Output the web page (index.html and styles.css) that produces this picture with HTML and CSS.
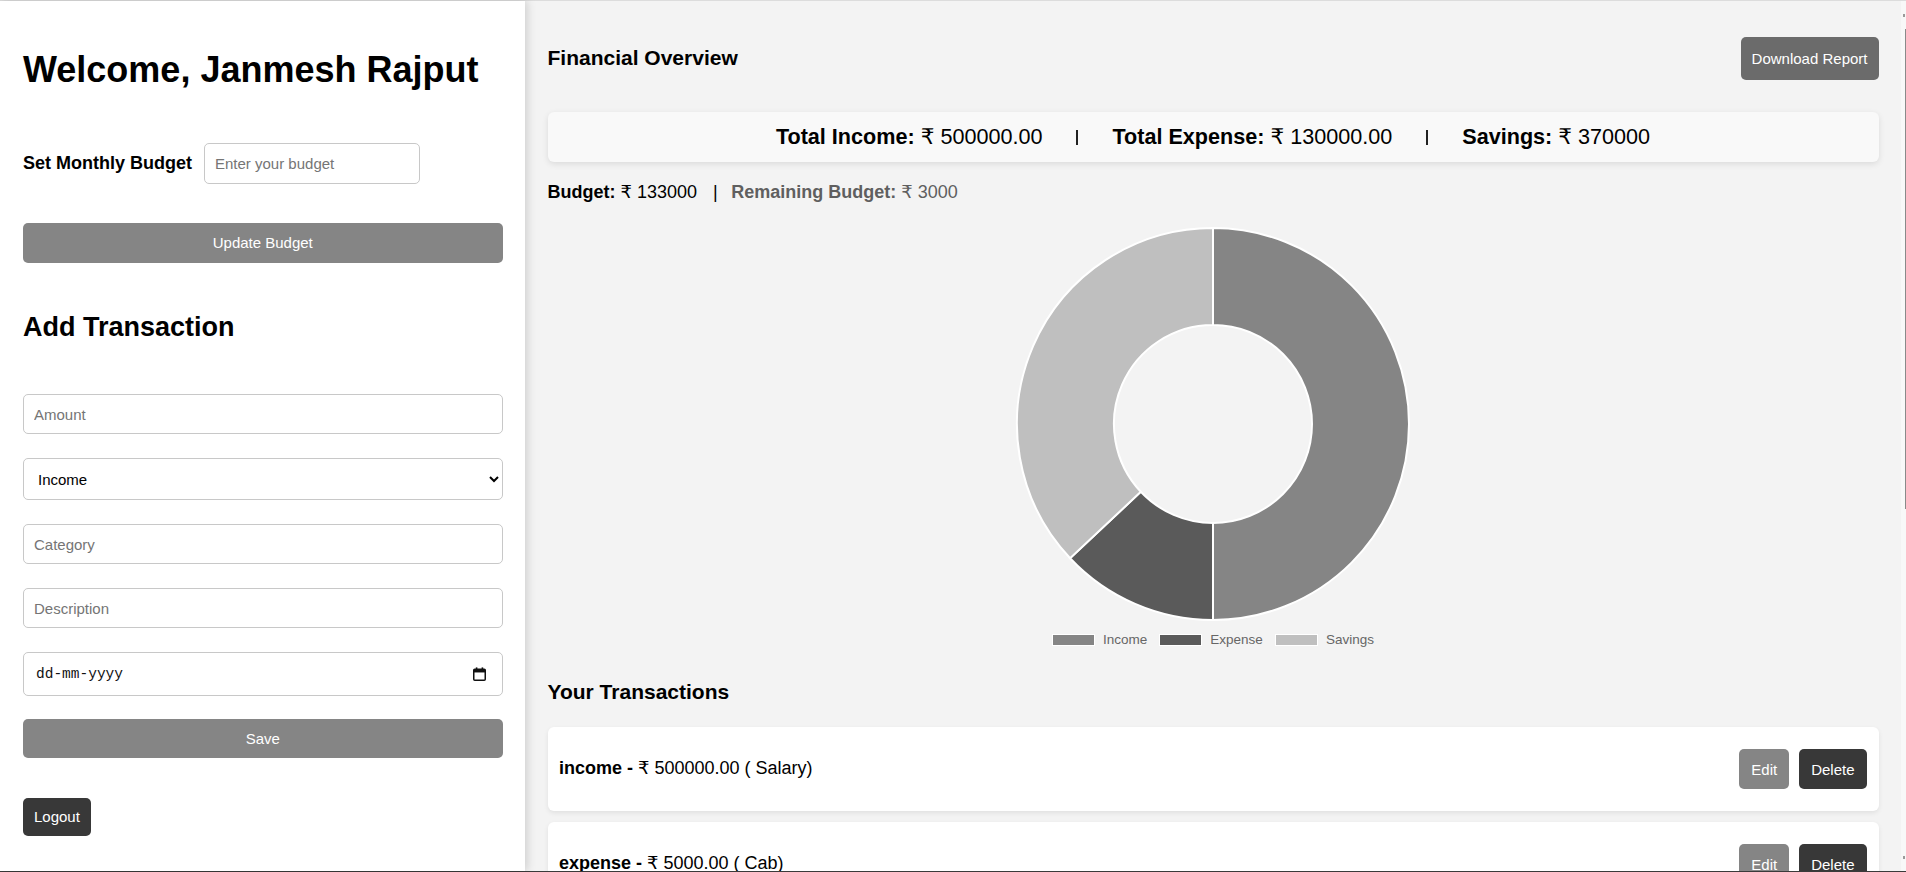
FILE: index.html
```html
<!DOCTYPE html>
<html lang="en">
<head>
<meta charset="utf-8">
<title>Dashboard</title>
<link rel="stylesheet" href="styles.css">
</head>
<body>
<div class="app">
  <aside class="sidebar">
    <h1 class="welcome">Welcome, Janmesh Rajput</h1>
    <div class="budget-row">
      <label class="budget-label" for="budget">Set Monthly Budget</label>
      <input id="budget" class="field budget-input" type="number" placeholder="Enter your budget">
    </div>
    <button class="btn btn-grey btn-block update-btn">Update Budget</button>

    <h2 class="add-title">Add Transaction</h2>
    <input class="field amount" type="number" placeholder="Amount">
    <select class="field select">
      <option>Income</option>
      <option>Expense</option>
    </select>
    <input class="field gap" type="text" placeholder="Category">
    <input class="field gap" type="text" placeholder="Description">
    <div class="field date-field">
      <input class="date-input" type="text" placeholder="dd-mm-yyyy">
      <svg class="cal-icon" width="13" height="14" viewBox="0 0 13 14" aria-hidden="true">
        <rect x="0.75" y="2.25" width="11.5" height="11" rx="1" fill="none" stroke="#111" stroke-width="1.5"/>
        <rect x="0.75" y="2.25" width="11.5" height="3.2" fill="#111"/>
        <rect x="2.8" y="0.4" width="1.6" height="2.6" fill="#111"/>
        <rect x="8.6" y="0.4" width="1.6" height="2.6" fill="#111"/>
      </svg>
    </div>
    <button class="btn btn-grey btn-block save-btn">Save</button>
    <button class="btn btn-dark logout-btn">Logout</button>
  </aside>

  <main class="main">
    <div class="header">
      <h3 class="section-title">Financial Overview</h3>
      <button class="btn download-btn">Download Report</button>
    </div>

    <div class="summary">
      <span><strong>Total Income:</strong> ₹ 500000.00</span>
      <span class="divider"></span>
      <span><strong>Total Expense:</strong> ₹ 130000.00</span>
      <span class="divider"></span>
      <span><strong>Savings:</strong> ₹ 370000</span>
    </div>

    <p class="budget-line"><strong>Budget:</strong> ₹ 133000<span class="sep">|</span><span class="remaining"><strong>Remaining Budget:</strong> ₹ 3000</span></p>

    <div class="chart">
      <svg class="donut" width="396" height="396" viewBox="0 0 396 396">
        <path d="M198,2 A196,196 0 0 1 198,394 L198,297 A99,99 0 0 0 198,99 Z" fill="#858585" stroke="#fff" stroke-width="2"/>
        <path d="M198,394 A196,196 0 0 1 55.1,332.2 L125.8,265.8 A99,99 0 0 0 198,297 Z" fill="#5a5a5a" stroke="#fff" stroke-width="2"/>
        <path d="M55.1,332.2 A196,196 0 0 1 198,2 L198,99 A99,99 0 0 0 125.8,265.8 Z" fill="#bfbfbf" stroke="#fff" stroke-width="2"/>
      </svg>
      <ul class="legend">
        <li><span class="swatch sw-income"></span>Income</li>
        <li><span class="swatch sw-expense"></span>Expense</li>
        <li><span class="swatch sw-savings"></span>Savings</li>
      </ul>
    </div>

    <h3 class="section-title tx-title">Your Transactions</h3>
    <ul class="tx-list">
      <li class="tx">
        <span class="tx-text"><strong>income -</strong> ₹ 500000.00 ( Salary)</span>
        <span class="tx-actions">
          <button class="btn btn-grey small">Edit</button>
          <button class="btn btn-dark small">Delete</button>
        </span>
      </li>
      <li class="tx">
        <span class="tx-text"><strong>expense -</strong> ₹ 5000.00 ( Cab)</span>
        <span class="tx-actions">
          <button class="btn btn-grey small">Edit</button>
          <button class="btn btn-dark small">Delete</button>
        </span>
      </li>
    </ul>
  </main>

  <div class="scrollbar" aria-hidden="true">
    <span class="scroll-arrow"></span>
    <span class="scroll-thumb"></span>
    <span class="scroll-arrow bottom"></span>
  </div>
</div>
</body>
</html>
```

FILE: styles.css
```css
* { box-sizing: border-box; }

html, body {
  margin: 0;
  padding: 0;
  height: 100%;
  overflow: hidden;
}

body {
  font-family: "Liberation Sans", Arial, "DejaVu Sans", sans-serif;
  font-size: 18px;
  color: #000;
  background: #f3f3f3;
}

.app {
  display: flex;
  height: 872px;
  border-top: 1px solid #dcdcdc;
  border-bottom: 1px solid #3a3a3a;
}

/* ---------- sidebar ---------- */
.sidebar {
  position: relative;
  z-index: 1;
  width: 525px;
  flex: 0 0 525px;
  background: #fff;
  padding: 48px 22.5px 0 23px;
  display: flex;
  flex-direction: column;
  align-items: stretch;
  box-shadow: 2px 0 9px rgba(0, 0, 0, 0.16);
}

.welcome {
  margin: 0;
  font-size: 36px;
  line-height: 41.4px;
  font-weight: bold;
}

.budget-row {
  margin-top: 53px;
  display: flex;
  align-items: center;
  gap: 12px;
}

.budget-label {
  font-weight: bold;
  font-size: 18px;
}

.field {
  font-family: "Liberation Sans", Arial, sans-serif;
  font-size: 15px;
  color: #000;
  background: #fff;
  border: 1px solid #c8c8c8;
  border-radius: 5px;
  height: 40.4px;
  padding: 0 10px;
  outline: none;
}

.field::placeholder { color: #757575; }

.budget-input {
  width: 215.5px;
}

.btn {
  font-family: "Liberation Sans", Arial, sans-serif;
  font-size: 15px;
  color: #fff;
  border: none;
  border-radius: 5px;
  cursor: pointer;
  line-height: 17px;
}

.btn-grey { background: #858585; }
.btn-dark { background: #383838; }

.btn-block {
  width: 100%;
  height: 39.7px;
}

.update-btn { margin-top: 39.2px; }

.add-title {
  margin: 49.4px 0 0;
  font-size: 27px;
  line-height: 31px;
  font-weight: bold;
}

.amount { margin-top: 51px; }

.select {
  margin-top: 23.5px;
  height: 42.4px;
  padding: 0 10px;
}

.gap { margin-top: 23.6px; }

.date-field {
  margin-top: 23.6px;
  height: 44.4px;
  display: flex;
  align-items: center;
  padding: 0 16px 0 12px;
}

.date-input {
  flex: 1;
  border: none;
  outline: none;
  background: transparent;
  font-family: "Liberation Mono", "DejaVu Sans Mono", monospace;
  font-size: 14.5px;
  padding: 0;
  letter-spacing: 0;
}

.date-input::placeholder { color: #111; }

.cal-icon { flex: 0 0 auto; }

.save-btn { margin-top: 22.3px; }

.logout-btn {
  align-self: flex-start;
  margin-top: 39.3px;
  height: 38.7px;
  padding: 0 11px;
}

/* ---------- main ---------- */
.main {
  flex: 1;
  min-width: 0;
  height: 100%;
  overflow: hidden;
  padding: 21px 22.5px 22px 22.5px;
  background: #f3f3f3;
}

.scrollbar {
  flex: 0 0 5px;
  width: 5px;
  background: #f8f8f8;
  display: flex;
  flex-direction: column;
  align-items: flex-end;
  padding-top: 13px;
}

.scroll-arrow {
  width: 2px;
  height: 3px;
  background: #9a9a9a;
  margin-right: 1px;
}

.scroll-arrow.bottom {
  margin-top: auto;
  margin-bottom: 12px;
}

.scroll-thumb {
  margin-top: 12px;
  width: 1px;
  height: 480px;
  background: #8a8a8a;
}

.header {
  height: 72px;
  display: flex;
  align-items: center;
  justify-content: space-between;
}

.section-title {
  margin: 0;
  font-size: 21px;
  line-height: 24px;
  font-weight: bold;
}

.download-btn {
  background: #6b6b6b;
  height: 43px;
  padding: 0 11px;
}

.summary {
  margin-top: 18px;
  height: 50px;
  background: #f9f9f9;
  border-radius: 6px;
  box-shadow: 0 2px 6px rgba(0, 0, 0, 0.1);
  display: flex;
  align-items: center;
  justify-content: center;
  gap: 34px;
  font-size: 21.6px;
}

.divider {
  display: inline-block;
  width: 2px;
  height: 15px;
  background: #222;
}

.budget-line {
  margin: 20.4px 0 0;
  font-size: 18px;
  line-height: 20.7px;
}

.sep { margin: 0 13.5px 0 16px; }

.remaining { color: #5f5f5f; }

.chart {
  margin-top: 23.3px;
  display: flex;
  flex-direction: column;
  align-items: center;
}

.donut { display: block; }

.legend {
  list-style: none;
  margin: 9.7px 0 0;
  padding: 0;
  display: flex;
  gap: 12px;
  font-size: 13.5px;
  line-height: 15.5px;
  color: #666;
}

.legend li {
  display: flex;
  align-items: center;
  gap: 8px;
}

.swatch {
  display: inline-block;
  width: 43px;
  height: 12px;
  border: 1px solid #fff;
}

.sw-income { background: #858585; }
.sw-expense { background: #5a5a5a; }
.sw-savings { background: #bfbfbf; }

.tx-title { margin-top: 32.5px; }

.tx-list {
  list-style: none;
  margin: 23.3px 0 0;
  padding: 0;
  display: flex;
  flex-direction: column;
  gap: 11.6px;
}

.tx {
  background: #fff;
  border-radius: 6px;
  box-shadow: 0 2px 5px rgba(0, 0, 0, 0.08);
  height: 83.4px;
  padding: 0 12px 0 11.5px;
  display: flex;
  align-items: center;
  justify-content: space-between;
  flex: 0 0 auto;
}

.tx-text {
  font-size: 18px;
  margin-top: -3px;
}

.tx-actions {
  display: flex;
  gap: 10px;
}

.small {
  height: 39.7px;
  padding: 0 12px;
}
```
